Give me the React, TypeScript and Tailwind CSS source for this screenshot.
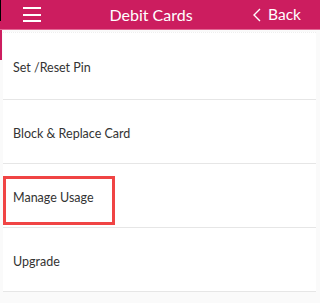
import React from "react";

const rows = ["Set /Reset Pin", "Block & Replace Card", "Manage Usage", "Upgrade"];

export default function App() {
  return (
    <div className="w-[320px] h-[303px] bg-[#fafafa] overflow-hidden" style={{ fontFamily: "Lato, 'Open Sans', sans-serif" }}>
      <div className="relative h-[29px] bg-[#cc1d5f] flex items-center">
        <div className="absolute left-0 top-0 w-px h-[21px] bg-black" />
        <div className="ml-[23px] w-[18px] flex flex-col gap-[4.5px]">
          <div className="h-[2px] bg-white" />
          <div className="h-[2px] bg-white" />
          <div className="h-[2px] bg-white" />
        </div>
        <div className="flex-1 text-center text-white text-[16px] leading-none pl-[8px]">Debit Cards</div>
        <div className="flex items-center mr-[19px] text-white text-[15.5px] leading-none gap-[7px]">
          <svg width="8" height="14" viewBox="0 0 8 14" fill="none" stroke="white" strokeWidth="1.4">
            <path d="M7 1 L1 7 L7 13" />
          </svg>
          <span>Back</span>
        </div>
      </div>
      <div className="h-px bg-[#e26a96]" />
      <div className="relative pl-[3px] pr-[4px] pt-[2px]">
        <div className="absolute left-0 top-0 w-[1.5px] h-[30px] bg-[#cc1d5f]" />
        <div className="bg-white border-t border-dotted border-[#eeeeee]">
          {rows.map((r, i) => (
            <div
              key={r}
              className={`relative flex items-center pl-[10px] pt-[5px] border-b border-[#e6e6e6] text-[12.5px] text-[#333333] ${i === 0 ? "h-[67px]" : "h-[64px]"}`}
            >
              {r}
              {i === 2 && (
                <div className="absolute left-0 top-[12px] w-[112px] h-[49px] border-[3px] border-[#f04444]" />
              )}
            </div>
          ))}
        </div>
      </div>
    </div>
  );
}
